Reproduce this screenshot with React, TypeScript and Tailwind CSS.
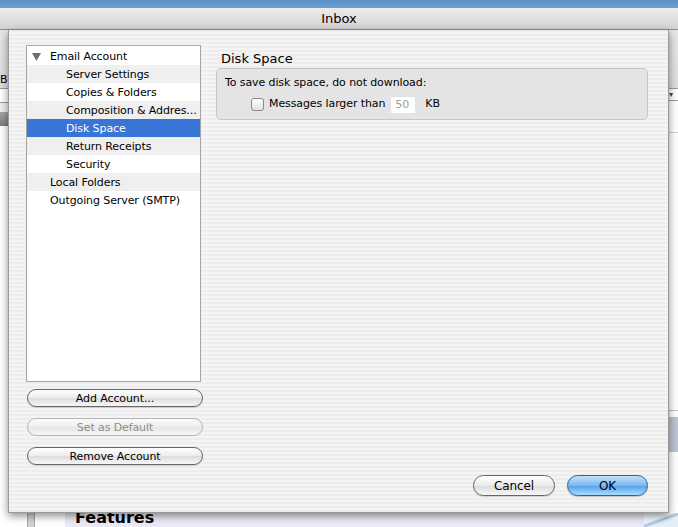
import React from "react";

const stripes =
  "bg-[repeating-linear-gradient(180deg,#ededed_0px,#ededed_2px,#f4f4f4_2px,#f4f4f4_4px)]";

type Row = { label: string; level: number; tone: "white" | "gray" | "sel"; open?: boolean };

const rows: Row[] = [
  { label: "Email Account", level: 0, tone: "white", open: true },
  { label: "Server Settings", level: 1, tone: "gray" },
  { label: "Copies & Folders", level: 1, tone: "white" },
  { label: "Composition & Addres...", level: 1, tone: "gray" },
  { label: "Disk Space", level: 1, tone: "sel" },
  { label: "Return Receipts", level: 1, tone: "gray" },
  { label: "Security", level: 1, tone: "white" },
  { label: "Local Folders", level: 0, tone: "gray" },
  { label: "Outgoing Server (SMTP)", level: 0, tone: "white" },
];

function AquaButton({ label, disabled, className = "" }: { label: string; disabled?: boolean; className?: string }) {
  return (
    <div
      className={`flex items-center justify-center rounded-full border text-[11px] leading-none ${
        disabled
          ? "border-[#b4b4b4] text-[#8c8c8c] bg-[linear-gradient(#fbfbfb,#eeeeee_50%,#e6e6e6_51%,#f6f6f6)]"
          : "border-[#666666] text-black bg-[linear-gradient(#ffffff,#ececec_50%,#dcdcdc_51%,#f7f7f7)] shadow-[0_1px_1px_rgba(0,0,0,0.15)]"
      } ${className}`}
    >
      {label}
    </div>
  );
}

export default function App() {
  return (
    <div className="relative w-[678px] h-[527px] overflow-hidden bg-white font-['DejaVu_Sans','Liberation_Sans',sans-serif] text-black tracking-[-0.1px]">
      {/* desktop strip */}
      <div className="h-[8px] bg-[linear-gradient(#5c8fc4,#6d9fd2)]" />
      {/* window title bar */}
      <div className="h-[22px] flex items-center justify-center border-b border-[#8c8c8c] bg-[linear-gradient(#ececec,#d3d3d3)] text-[13px] tracking-normal">
        Inbox
      </div>

      {/* main window behind the sheet */}
      <div className="flex h-[483px]">
        <div className="w-[8px] flex flex-col">
          <div className="h-[58px] bg-[linear-gradient(#e6e6e6,#dddddd)] relative">
            <span className="absolute left-0 top-[44px] text-[11px] leading-none">Bo</span>
          </div>
          <div className="h-[15px] border-y border-[#9a9a9a] bg-white" />
          <div className="h-[9px] bg-[#eeeeee]" />
          <div className="h-[14px] bg-[linear-gradient(#a8a8a8,#7c7c7c)]" />
          <div className="flex-1 bg-white" />
        </div>
        <div className="flex-1 bg-[linear-gradient(#e6e6e6,#dddddd_58px,#ffffff_58px)]" />
        <div className="w-[9px] flex flex-col">
          <div className="h-[58px] bg-[linear-gradient(#e6e6e6,#dddddd)]" />
          <div className="h-[13px] border-y border-[#9a9a9a] bg-white flex items-center text-[8px] text-[#444] leading-none">
            ▾
          </div>
          <div className="h-[32px] bg-white border-b border-[#cfcfcf]" />
          <div className="h-[277px] bg-white" />
          <div className="h-[8px] border-y border-[#c0c0c0] bg-white" />
          <div className="h-[34px] bg-[#bcc4d2]" />
          <div className="flex-1 bg-white" />
        </div>
      </div>
      <div className="flex h-[14px]">
        <div className="w-[27px] bg-white" />
        <div className="w-[8px] bg-[#d2d2d2] border-x border-[#a8a8a8]" />
        <div className="w-[30px] bg-white" />
        <div className="flex-1 bg-[#eceaf6] pl-[10px] text-[16px] font-bold leading-none flex items-end tracking-normal">
          <span className="pb-[1px]">Features</span>
        </div>
        <div className="w-[34px] bg-[linear-gradient(160deg,#f4f8fc_40%,#9fc0e0_50%,#e6eef7_60%)]" />
      </div>

      {/* sheet */}
      <div
        className={`absolute left-[8px] top-[30px] w-[661px] h-[483px] ${stripes} border-x border-b border-[#9a9a9a] shadow-[0_3px_8px_rgba(0,0,0,0.45)] flex flex-col`}
      >
        <div className="flex flex-1 pt-[15px] pl-[17px] pr-[20px] pb-[16px]">
          {/* left column */}
          <div className="w-[178px] flex flex-col">
            <div className="w-[175px] h-[337px] border border-[#a5a5a5] bg-white pt-[1px] text-[11px]">
              {rows.map((r) => (
                <div
                  key={r.label}
                  className={`h-[18px] pt-[2px] flex items-center whitespace-nowrap ${
                    r.tone === "sel" ? "bg-[#3875d7] text-white" : r.tone === "gray" ? "bg-[#efefef]" : "bg-white"
                  } ${r.level === 0 ? "pl-[23px]" : "pl-[39px]"} relative`}
                >
                  {r.open && (
                    <svg className="absolute left-[5px] top-[6px]" width="9" height="8" viewBox="0 0 9 8">
                      <polygon points="0,0 9,0 4.5,8" fill="#6e6e6e" />
                    </svg>
                  )}
                  {r.label}
                </div>
              ))}
            </div>
            <AquaButton label="Add Account..." className="mt-[7px] ml-[1px] w-[176px] h-[18px]" />
            <AquaButton label="Set as Default" disabled className="mt-[11px] ml-[1px] w-[176px] h-[18px]" />
            <AquaButton label="Remove Account" className="mt-[11px] ml-[1px] w-[176px] h-[18px]" />
          </div>

          {/* right column */}
          <div className="ml-[12px] flex-1 flex flex-col">
            <div className="pt-[6px] pl-[5px] text-[13px] leading-[16px] tracking-normal">Disk Space</div>
            <div className="mt-[1px] h-[52px] rounded-[5px] border border-[#c6c6c6] bg-[#e4e4e4] pl-[8px] pt-[7px]">
              <div className="text-[11px] leading-[14px]">To save disk space, do not download:</div>
              <div className="mt-[6px] ml-[26px] flex items-center h-[17px] text-[11px]">
                <div className="w-[13px] h-[13px] rounded-[3px] border border-[#8a8a8a] bg-[linear-gradient(#ffffff,#e2e2e2)]" />
                <span className="ml-[5px]">Messages larger than</span>
                <div className="ml-[6px] w-[24px] h-[17px] bg-white border-t border-[#e0e0e0] text-[#a0a0a0] flex items-center pl-[4px]">
                  50
                </div>
                <span className="ml-[10px]">KB</span>
              </div>
            </div>
            <div className="flex-1" />
            <div className="flex justify-end gap-[12px]">
              <AquaButton label="Cancel" className="w-[82px] h-[21px] text-[12px]" />
              <div className="w-[81px] h-[21px] flex items-center justify-center rounded-full border border-[#2f5f9c] text-[12px] bg-[linear-gradient(#c4e1fa,#7ab8f0_50%,#549fe9_51%,#a8dcff)] shadow-[0_1px_1px_rgba(0,0,0,0.2)]">
                OK
              </div>
            </div>
          </div>
        </div>
      </div>
    </div>
  );
}
